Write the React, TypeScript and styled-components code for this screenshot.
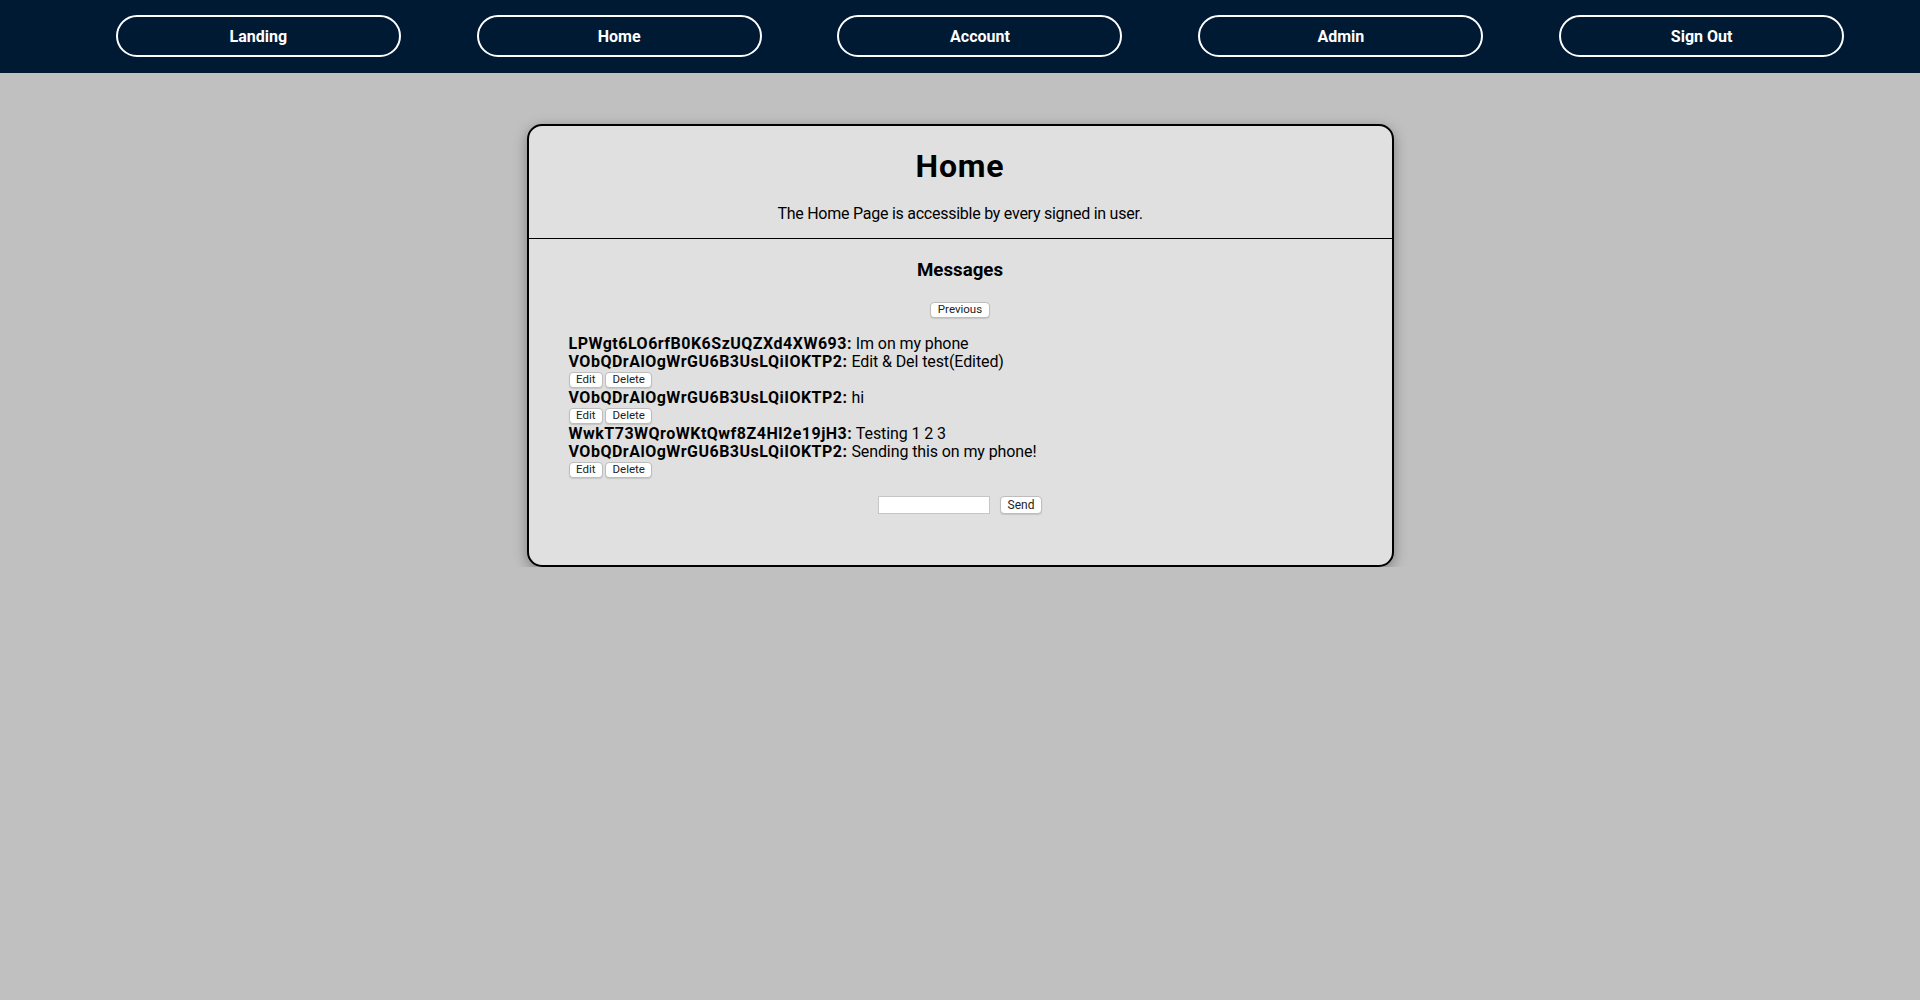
import React from "react";
import styled, { createGlobalStyle } from "styled-components";

const FONT = `Roboto, Inter, "Noto Sans", "Liberation Sans", sans-serif`;

const GlobalStyle = createGlobalStyle`
  html, body { margin: 0; padding: 0; }
  body {
    background: #c0c0c0;
    font-family: ${FONT};
    color: #000;
  }
`;

const NavBar = styled.nav`
  background: #011a33;
  height: 73px;
`;

const NavList = styled.ul`
  list-style: none;
  margin: 0;
  padding: 15px 0 0 40px;
  display: flex;
  justify-content: space-evenly;
`;

const NavButton = styled.button`
  width: 285px;
  height: 42px;
  border: 2px solid #fff;
  border-radius: 21px;
  background: transparent;
  color: #fff;
  font-family: ${FONT};
  font-size: 16px;
  font-weight: 700;
  cursor: pointer;
`;

const Main = styled.main`
  padding-top: 51px;
`;

const Card = styled.section`
  width: 863px;
  margin: 0 auto;
  background: #e0e0e0;
  border: 2px solid #000;
  border-radius: 15px;
  box-shadow: 0 4px 14px rgba(0, 0, 0, 0.35);
  overflow: hidden;
`;

const Header = styled.header`
  text-align: center;
  padding: 20.5px 0 15px;
  border-bottom: 1px solid #000;
`;

const Title = styled.h1`
  margin: 0;
  font-size: 32px;
  line-height: 39px;
  font-weight: 700;
  letter-spacing: 0.8px;
`;

const Subtitle = styled.p`
  margin: 18.5px 0 0;
  font-size: 16px;
  line-height: 19px;
  letter-spacing: -0.25px;
`;

const MessagesSection = styled.div`
  padding: 19.5px 0 51.5px;
  display: flex;
  flex-direction: column;
`;

const SectionTitle = styled.h3`
  margin: 0;
  text-align: center;
  font-size: 18.7px;
  line-height: 23px;
  font-weight: 700;
`;

const Center = styled.div<{ $top: number }>`
  display: flex;
  justify-content: center;
  align-items: center;
  gap: 10px;
  margin-top: ${(p) => p.$top}px;
`;

const SmallButton = styled.button<{ $size?: number; $h?: number }>`
  height: ${(p) => p.$h ?? 16}px;
  padding: 0 6.5px;
  background: #fff;
  border: 1px solid #bdbdbd;
  border-radius: 4px;
  box-shadow: 0 1px 1px rgba(0, 0, 0, 0.12);
  color: #222;
  font-family: ${FONT};
  font-size: ${(p) => p.$size ?? 11.5}px;
  line-height: 1;
  cursor: pointer;
`;

const MessageList = styled.ul`
  list-style: none;
  margin: 17.4px 0 0;
  padding: 0 0 0 40px;
`;

const MessageItem = styled.li``;

const MessageText = styled.div`
  font-size: 16px;
  line-height: 18.3px;
  letter-spacing: -0.1px;
`;

const Author = styled.strong`
  font-weight: 700;
  letter-spacing: 0.5px;
`;

const ActionRow = styled.div`
  height: 17.5px;
  display: flex;
  align-items: center;
  gap: 2px;
`;

const TextInput = styled.input`
  width: 112px;
  height: 18px;
  box-sizing: border-box;
  border: 1px solid #c6c6c6;
  background: #fff;
  padding: 0 4px;
  outline: none;
`;

type Message = { uid: string; text: string; own: boolean };

const messages: Message[] = [
  { uid: "LPWgt6LO6rfB0K6SzUQZXd4XW693", text: "Im on my phone", own: false },
  { uid: "VObQDrAlOgWrGU6B3UsLQiIOKTP2", text: "Edit & Del test(Edited)", own: true },
  { uid: "VObQDrAlOgWrGU6B3UsLQiIOKTP2", text: "hi", own: true },
  { uid: "WwkT73WQroWKtQwf8Z4Hl2e19jH3", text: "Testing 1 2 3", own: false },
  { uid: "VObQDrAlOgWrGU6B3UsLQiIOKTP2", text: "Sending this on my phone!", own: true },
];

const navItems = ["Landing", "Home", "Account", "Admin", "Sign Out"];

export default function App() {
  return (
    <>
      <GlobalStyle />
      <NavBar>
        <NavList>
          {navItems.map((n) => (
            <li key={n}>
              <NavButton>{n}</NavButton>
            </li>
          ))}
        </NavList>
      </NavBar>
      <Main>
        <Card>
          <Header>
            <Title>Home</Title>
            <Subtitle>The Home Page is accessible by every signed in user.</Subtitle>
          </Header>
          <MessagesSection>
            <SectionTitle>Messages</SectionTitle>
            <Center $top={20}>
              <SmallButton>Previous</SmallButton>
            </Center>
            <MessageList>
              {messages.map((m, i) => (
                <MessageItem key={i}>
                  <MessageText>
                    <Author>{m.uid}:</Author> {m.text}
                  </MessageText>
                  {m.own && (
                    <ActionRow>
                      <SmallButton>Edit</SmallButton>
                      <SmallButton>Delete</SmallButton>
                    </ActionRow>
                  )}
                </MessageItem>
              ))}
            </MessageList>
            <Center $top={17}>
              <TextInput type="text" />
              <SmallButton $size={12} $h={18}>Send</SmallButton>
            </Center>
          </MessagesSection>
        </Card>
      </Main>
    </>
  );
}
